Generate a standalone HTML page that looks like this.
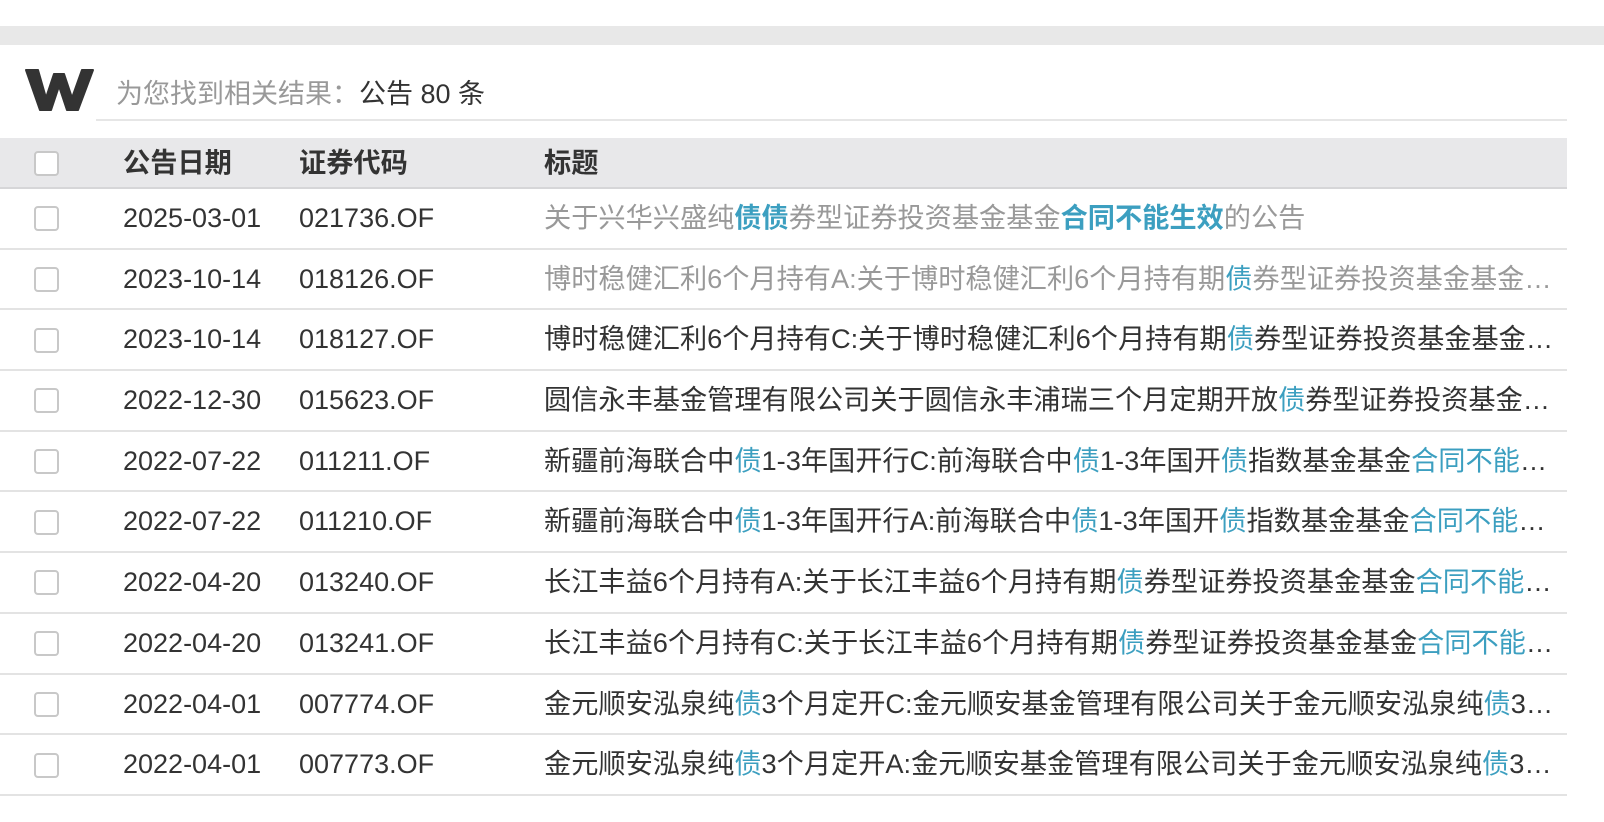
<!DOCTYPE html>
<html><head><meta charset="utf-8"><style>
*{margin:0;padding:0;box-sizing:border-box}
body{width:1604px;height:822px;background:#fff;font-family:"Liberation Sans","Noto Sans CJK SC",sans-serif;color:#333;overflow:hidden;position:relative}
.band{position:absolute;left:0;top:26px;width:1604px;height:19px;background:#e8e8e8}
.logo{position:absolute;left:24px;top:64px}
.res{position:absolute;left:116px;top:72px;font-size:27px;color:#999;white-space:nowrap}
.res b{font-weight:normal;color:#333}
.line{position:absolute;left:96px;top:119px;width:1471px;height:2px;background:#e6e6e6}
.tbl{position:absolute;left:0;top:138px;width:1567px}
.row{position:relative;height:60.7px;border-bottom:2px solid #e3e3e3;white-space:nowrap}
.hd{height:51px;background:#e8e8ea;border-bottom:2px solid #d6d6d8;font-weight:bold}
.cb{position:absolute;left:34px;top:50%;margin-top:-12px;width:25px;height:25px;border:2px solid #c8c8c8;border-radius:4px;background:#fff}
.c{position:absolute;top:0;height:58px;line-height:58px;font-size:27.2px}
.hd .c{height:49px;line-height:49px}
.d{left:123px;font-size:27px}
.k{left:299px;font-size:27px}
.t{left:544px;width:1020px;overflow:hidden;text-overflow:ellipsis}
.g{color:#999}
.h{color:#3c9fc0}
.hb{color:#3c9fc0;font-weight:bold}
</style></head><body>
<div class="band"></div>
<svg class="logo" width="72" height="50" viewBox="0 0 72 50"><path d="M2 6 L14 6 L22 34 L30 10 L40 10 L48 34 L58 6 L69 6 L54 46 L43 46 L35 22 L27 46 L16 46 Z" fill="#333" stroke="#333" stroke-width="2" stroke-linejoin="round"/></svg>
<div class="res">为您找到相关结果：<b>公告 80 条</b></div>
<div class="line"></div>
<div class="tbl">
<div class="row hd"><div class="cb"></div><div class="c" style="left:123px">公告日期</div><div class="c" style="left:299px">证券代码</div><div class="c" style="left:544px">标题</div></div>
<div class="row"><div class="cb"></div><div class="c d">2025-03-01</div><div class="c k">021736.OF</div><div class="c t g">关于兴华兴盛纯<span class="hb">债债</span>券型证券投资基金基金<span class="hb">合同不能生效</span>的公告</div></div>
<div class="row"><div class="cb"></div><div class="c d">2023-10-14</div><div class="c k">018126.OF</div><div class="c t g">博时稳健汇利6个月持有A:关于博时稳健汇利6个月持有期<span class="h">债</span>券型证券投资基金基金合同不能生效的公告</div></div>
<div class="row"><div class="cb"></div><div class="c d">2023-10-14</div><div class="c k">018127.OF</div><div class="c t">博时稳健汇利6个月持有C:关于博时稳健汇利6个月持有期<span class="h">债</span>券型证券投资基金基金合同不能生效的公告</div></div>
<div class="row"><div class="cb"></div><div class="c d">2022-12-30</div><div class="c k">015623.OF</div><div class="c t">圆信永丰基金管理有限公司关于圆信永丰浦瑞三个月定期开放<span class="h">债</span>券型证券投资基金基金合同不能生效的公告</div></div>
<div class="row"><div class="cb"></div><div class="c d">2022-07-22</div><div class="c k">011211.OF</div><div class="c t">新疆前海联合中<span class="h">债</span>1-3年国开行C:前海联合中<span class="h">债</span>1-3年国开<span class="h">债</span>指数基金基金<span class="h">合同不能生效</span>的公告</div></div>
<div class="row"><div class="cb"></div><div class="c d">2022-07-22</div><div class="c k">011210.OF</div><div class="c t">新疆前海联合中<span class="h">债</span>1-3年国开行A:前海联合中<span class="h">债</span>1-3年国开<span class="h">债</span>指数基金基金<span class="h">合同不能生效</span>的公告</div></div>
<div class="row"><div class="cb"></div><div class="c d">2022-04-20</div><div class="c k">013240.OF</div><div class="c t">长江丰益6个月持有A:关于长江丰益6个月持有期<span class="h">债</span>券型证券投资基金基金<span class="h">合同不能生效</span>的公告</div></div>
<div class="row"><div class="cb"></div><div class="c d">2022-04-20</div><div class="c k">013241.OF</div><div class="c t">长江丰益6个月持有C:关于长江丰益6个月持有期<span class="h">债</span>券型证券投资基金基金<span class="h">合同不能生效</span>的公告</div></div>
<div class="row"><div class="cb"></div><div class="c d">2022-04-01</div><div class="c k">007774.OF</div><div class="c t">金元顺安泓泉纯<span class="h">债</span>3个月定开C:金元顺安基金管理有限公司关于金元顺安泓泉纯<span class="h">债</span>3个月定期开放</div></div>
<div class="row"><div class="cb"></div><div class="c d">2022-04-01</div><div class="c k">007773.OF</div><div class="c t">金元顺安泓泉纯<span class="h">债</span>3个月定开A:金元顺安基金管理有限公司关于金元顺安泓泉纯<span class="h">债</span>3个月定期开放</div></div>
</div>
</body></html>
